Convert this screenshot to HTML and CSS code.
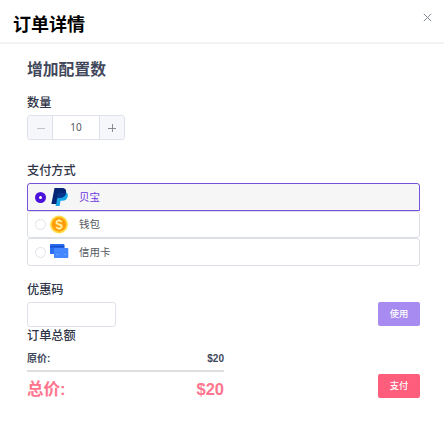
FILE: index.html
```
<!DOCTYPE html>
<html lang="zh-CN">
<head>
<meta charset="utf-8">
<title>订单详情</title>
<link rel="stylesheet" href="styles.css">
</head>
<body>
<header class="header">
  <h1 class="title">订单详情</h1>
  <svg class="close" viewBox="0 0 9 9"><path d="M.8.8l7.400 7.400M8.200.8L.8 8.200"/></svg>
</header>
<main class="content">
  <h2 class="product">增加配置数</h2>
  <h3 class="label">数量</h3>
  <div class="stepper">
    <span class="step minus"><svg viewBox="0 0 8 8"><path d="M0 4.500h8"/></svg></span>
    <span class="value">10</span>
    <span class="step plus"><svg viewBox="0 0 8 8"><path d="M0 4.500h8M4.500 0v8"/></svg></span>
  </div>
  <h3 class="label label-pay">支付方式</h3>
  <div class="methods">
    <div class="method selected">
      <span class="radio"></span>
      <svg class="icon" viewBox="0 0 20 20">
        <path fill="#17a5e8" d="M8 5.500h9.300c1.500 1 1.700 2.600 1.300 4.200-.7 2.900-2.700 4.100-5.600 4.100h-1.500l-.9 5.200H6.600z"/>
        <path fill="#062575" d="M5.500 1h7.100c3.600 0 5.100 1.600 4.400 4.800-.7 3.600-3 5-6.500 5H8.300L7.100 17H2.400z"/>
        <path fill="#08358e" d="M8.700 6h8.300c-.7 3.400-3 4.800-6.500 4.800H8.300L7.100 17h-.3z"/>
      </svg>
      <span class="name">贝宝</span>
    </div>
    <div class="method">
      <span class="radio"></span>
      <svg class="icon" viewBox="0 0 20 20">
        <circle cx="10" cy="9.500" r="9" fill="#ffdc45"/>
        <circle cx="10" cy="9.500" r="7.200" fill="#ff9d0a"/>
        <path fill="none" stroke="#fff0a0" stroke-width="1.800" d="M12.700 7C12 6 11.100 5.700 10 5.700c-1.500 0-2.600.7-2.600 1.900 0 2.600 5.300 1.200 5.300 3.800 0 1.200-1.200 1.900-2.700 1.900-1.200 0-2.200-.4-2.900-1.400M10 4.200v1.500M10 13.300v1.500"/>
      </svg>
      <span class="name">钱包</span>
    </div>
    <div class="method">
      <span class="radio"></span>
      <svg class="icon" viewBox="0 0 20 20">
        <rect x="1" y="2" width="14.400" height="10" rx=".7" fill="#2b6cf0"/>
        <path fill="#1650cf" d="M1 3.800h14.400v1.700H1z"/>
        <rect x="5" y="6" width="14.300" height="10" rx=".7" fill="#4587ff"/>
        <path fill="none" stroke="#8bb8ff" stroke-width=".8" d="M7.500 12.500H9m6.500 0H17"/>
      </svg>
      <span class="name">信用卡</span>
    </div>
  </div>
  <h3 class="label label-code">优惠码</h3>
  <div class="coupon">
    <input class="code" type="text" aria-label="优惠码">
    <button class="btn apply">使用</button>
  </div>
  <h3 class="label label-sum">订单总额</h3>
  <div class="checkout">
    <div class="summary">
      <div class="original"><span>原价:</span><span>$20</span></div>
      <div class="total"><span>总价:</span><span>$20</span></div>
    </div>
    <button class="btn pay">支付</button>
  </div>
</main>
</body>
</html>
```
FILE: styles.css
```
* { box-sizing: border-box; }
body {
  margin: 0;
  height: 427px;
  overflow: hidden;
  background: #fff;
  color: #303549;
  font-family: "Liberation Sans", "Noto Sans CJK SC", sans-serif;
}
h1, h2, h3 { margin: 0; }
.header {
  display: flex;
  justify-content: space-between;
  height: 44px;
  padding: 13px 12px 0 13px;
  border-bottom: 2px solid #f3f3f3;
}
.title { font-size: 18px; line-height: 25px; color: #000; }
.close { width: 9px; height: 9px; fill: none; stroke: #858993; stroke-width: 1; }
.content { padding: 14px 24px 0 27px; }
.product { font-size: 15.8px; line-height: 24px; color: #41475a; }
.label { font-size: 12.2px; line-height: 18px; font-weight: 500; margin-top: 12px; }
.stepper {
  display: flex;
  width: 98px;
  height: 25px;
  margin-top: 3px;
  border: 1px solid #dfe2ea;
  border-radius: 3px;
  overflow: hidden;
}
.step { display: flex; align-items: center; justify-content: center; width: 25px; background: #f5f7fa; }
.step svg { width: 8px; height: 8px; fill: none; stroke: #888c95; stroke-width: 1; }
.minus { width: 25px; padding-left: 1px; border-right: 1px solid #dfe2ea; }
.minus svg { stroke: #c0c4cc; }
.plus { border-left: 1px solid #dfe2ea; }
.value { flex: 1; text-align: center; font: 10px/23px "Noto Sans", sans-serif; color: #555861; }
.label-pay { margin-top: 22px; }
.methods { margin-top: 3px; }
.method {
  display: flex;
  align-items: center;
  height: 27px;
  padding-left: 7px;
  border: 1px solid #dcdfe6;
  border-radius: 3px;
  font-size: 10.5px;
  color: #555861;
}
.method:last-child { height: 28px; }
.selected { height: 28px; border-color: #7750dc; border-radius: 3px 3px 0 0; background: #f6f6f7; color: #6d35e0; }
.radio { width: 11px; height: 11px; border: 1px solid #dfe2ea; border-radius: 50%; background: #fff; }
.selected .radio { border: 4px solid #4b12dc; }
.icon { width: 20px; height: 20px; margin: 0 10px 0 3px; }
.name { margin-top: -2px; }
.label-code { margin-top: 15px; }
.coupon { display: flex; justify-content: space-between; margin-top: 3px; }
.code { width: 89px; height: 25px; padding: 0 6px; border: 1px solid #dfe2ea; border-radius: 3px; background: #fff; }
.btn {
  width: 42px;
  height: 24px;
  padding: 0;
  border: 0;
  border-radius: 2px;
  color: #fff;
  font: 500 9.3px/24px "Liberation Sans", "Noto Sans CJK SC", sans-serif;
}
.apply { background: #a78bf0; }
.label-sum { margin-top: 0; }
.checkout { display: flex; justify-content: space-between; }
.summary { width: 197px; padding-top: 4px; font-weight: 700; }
.original, .total { display: flex; justify-content: space-between; }
.original { height: 23px; border-bottom: 2px solid #dedede; font-size: 10px; line-height: 19px; color: #41475a; }
.total { font-size: 16.5px; line-height: 24px; padding-top: 5px; color: #ff758e; }
.pay { margin-top: 29px; background: #ff5d7c; }
```
